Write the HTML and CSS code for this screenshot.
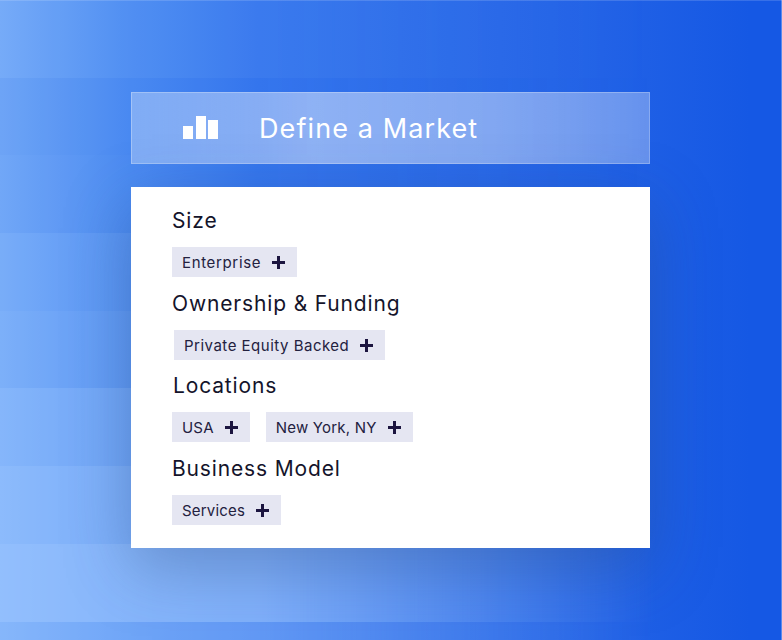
FILE: index.html
```html
<!DOCTYPE html>
<html lang="en">

<head>
  <meta charset="UTF-8" />
  <title>Define a Market</title>
  <link rel="stylesheet" href="styles.css">
</head>

<body>
  <div class="stage">
    <div class="bands">
      <div class="band band-1"></div>
      <div class="band band-2"></div>
      <div class="band band-3"></div>
      <div class="band band-4"></div>
      <div class="band band-5"></div>
      <div class="band band-6"></div>
      <div class="band band-7"></div>
      <div class="band band-8"></div>
      <div class="band band-9"></div>
    </div>

    <div class="panel">
      <header class="title-bar">
        <svg class="bars-icon" width="35" height="24" viewBox="0 0 35 24" fill="#fff">
          <rect x="0" y="10" width="10" height="13" />
          <rect x="13" y="0" width="10" height="23" />
          <rect x="25" y="4" width="10" height="19" />
        </svg>
        <h1>Define a Market</h1>
      </header>

      <div class="card">
        <h2>Size</h2>
        <div class="tags">
          <span class="tag tag-wide">Enterprise <i class="plus"></i></span>
        </div>

        <h2>Ownership &amp; Funding</h2>
        <div class="tags nudge-2">
          <span class="tag">Private Equity Backed <i class="plus"></i></span>
        </div>

        <h2 class="locations">Locations</h2>
        <div class="tags">
          <span class="tag tag-tight">USA <i class="plus"></i></span>
          <span class="tag tag-tight">New York, NY <i class="plus"></i></span>
        </div>

        <h2>Business Model</h2>
        <div class="tags">
          <span class="tag tag-tight">Services <i class="plus"></i></span>
        </div>
      </div>
    </div>
  </div>
</body>

</html>
```

FILE: styles.css
```css
* {
  margin: 0;
  padding: 0;
  box-sizing: border-box;
}

body {
  font-family: Inter, 'Open Sans', sans-serif;
  overflow: hidden;
}

.stage {
  position: relative;
  width: 782px;
  height: 640px;
  padding: 92px 132px 0 131px;
  background: linear-gradient(90deg, #74aaf8 0%, #4c8cf2 17%, #3677ee 33%, #2e6eea 51%, #2262e6 77%, #1558e4 96%);
  box-shadow: inset 0 1px rgba(255, 255, 255, 0.15), inset -1px 0 rgba(255, 255, 255, 0.3);
}

.bands {
  position: absolute;
  top: 0;
  left: 0;
  width: 782px;
  height: 640px;
  overflow: hidden;
  -webkit-mask-image: linear-gradient(90deg, #000 33%, transparent 84%);
  mask-image: linear-gradient(90deg, #000 33%, transparent 84%);
}

.band {
  height: 77.7px;
}

.band-1 { background: rgba(160, 200, 255, 0.05); }
.band-2 { background: rgba(40, 100, 230, 0.08); }
.band-3 { background: rgba(40, 100, 230, 0.04); }
.band-4 { background: rgba(160, 200, 255, 0.12); }
.band-5 { background: rgba(160, 200, 255, 0.2); }
.band-6 { background: rgba(160, 200, 255, 0.4); }
.band-7 { background: rgba(160, 200, 255, 0.55); }
.band-8 { background: rgba(160, 200, 255, 0.7); }
.band-9 { background: rgba(160, 200, 255, 0.42); }

.panel {
  position: relative;
}

.title-bar {
  height: 72px;
  display: flex;
  align-items: center;
  padding-left: 51px;
  gap: 41px;
  background: linear-gradient(90deg, rgba(255, 255, 255, 0.3), rgba(255, 255, 255, 0.45) 35%, rgba(255, 255, 255, 0.42) 70%, rgba(255, 255, 255, 0.32));
  border: 1px solid rgba(255, 255, 255, 0.25);
}

.bars-icon {
  flex: none;
}

h1 {
  color: #fff;
  font-size: 27px;
  font-weight: 400;
  letter-spacing: 1.1px;
}

.card {
  margin-top: 23px;
  height: 361px;
  padding: 21px 41px 0;
  background: #fff;
  box-shadow: 0 20px 60px rgba(40, 70, 120, 0.34);
}

h2 {
  color: #14142b;
  font-size: 21px;
  font-weight: 400;
  line-height: 26px;
  letter-spacing: 0.85px;
}

.tags {
  display: flex;
  gap: 16px;
  margin: 13px 0 14px;
}

.tag {
  display: flex;
  align-items: center;
  gap: 11px;
  height: 30px;
  padding: 0 12px 0 10px;
  background: #e5e6f2;
  color: #23213f;
  font-size: 15px;
  letter-spacing: 0.5px;
}

.tag-wide {
  letter-spacing: 0.65px;
}

.tag-tight {
  letter-spacing: 0.2px;
}

.plus {
  width: 13px;
  height: 13px;
  background: linear-gradient(#1c1540, #1c1540) center / 13px 3px no-repeat,
    linear-gradient(#1c1540, #1c1540) center / 3px 13px no-repeat;
}

.locations {
  margin: -1px 0 0 1px;
}

.nudge-2 {
  margin-left: 2px;
}
```
